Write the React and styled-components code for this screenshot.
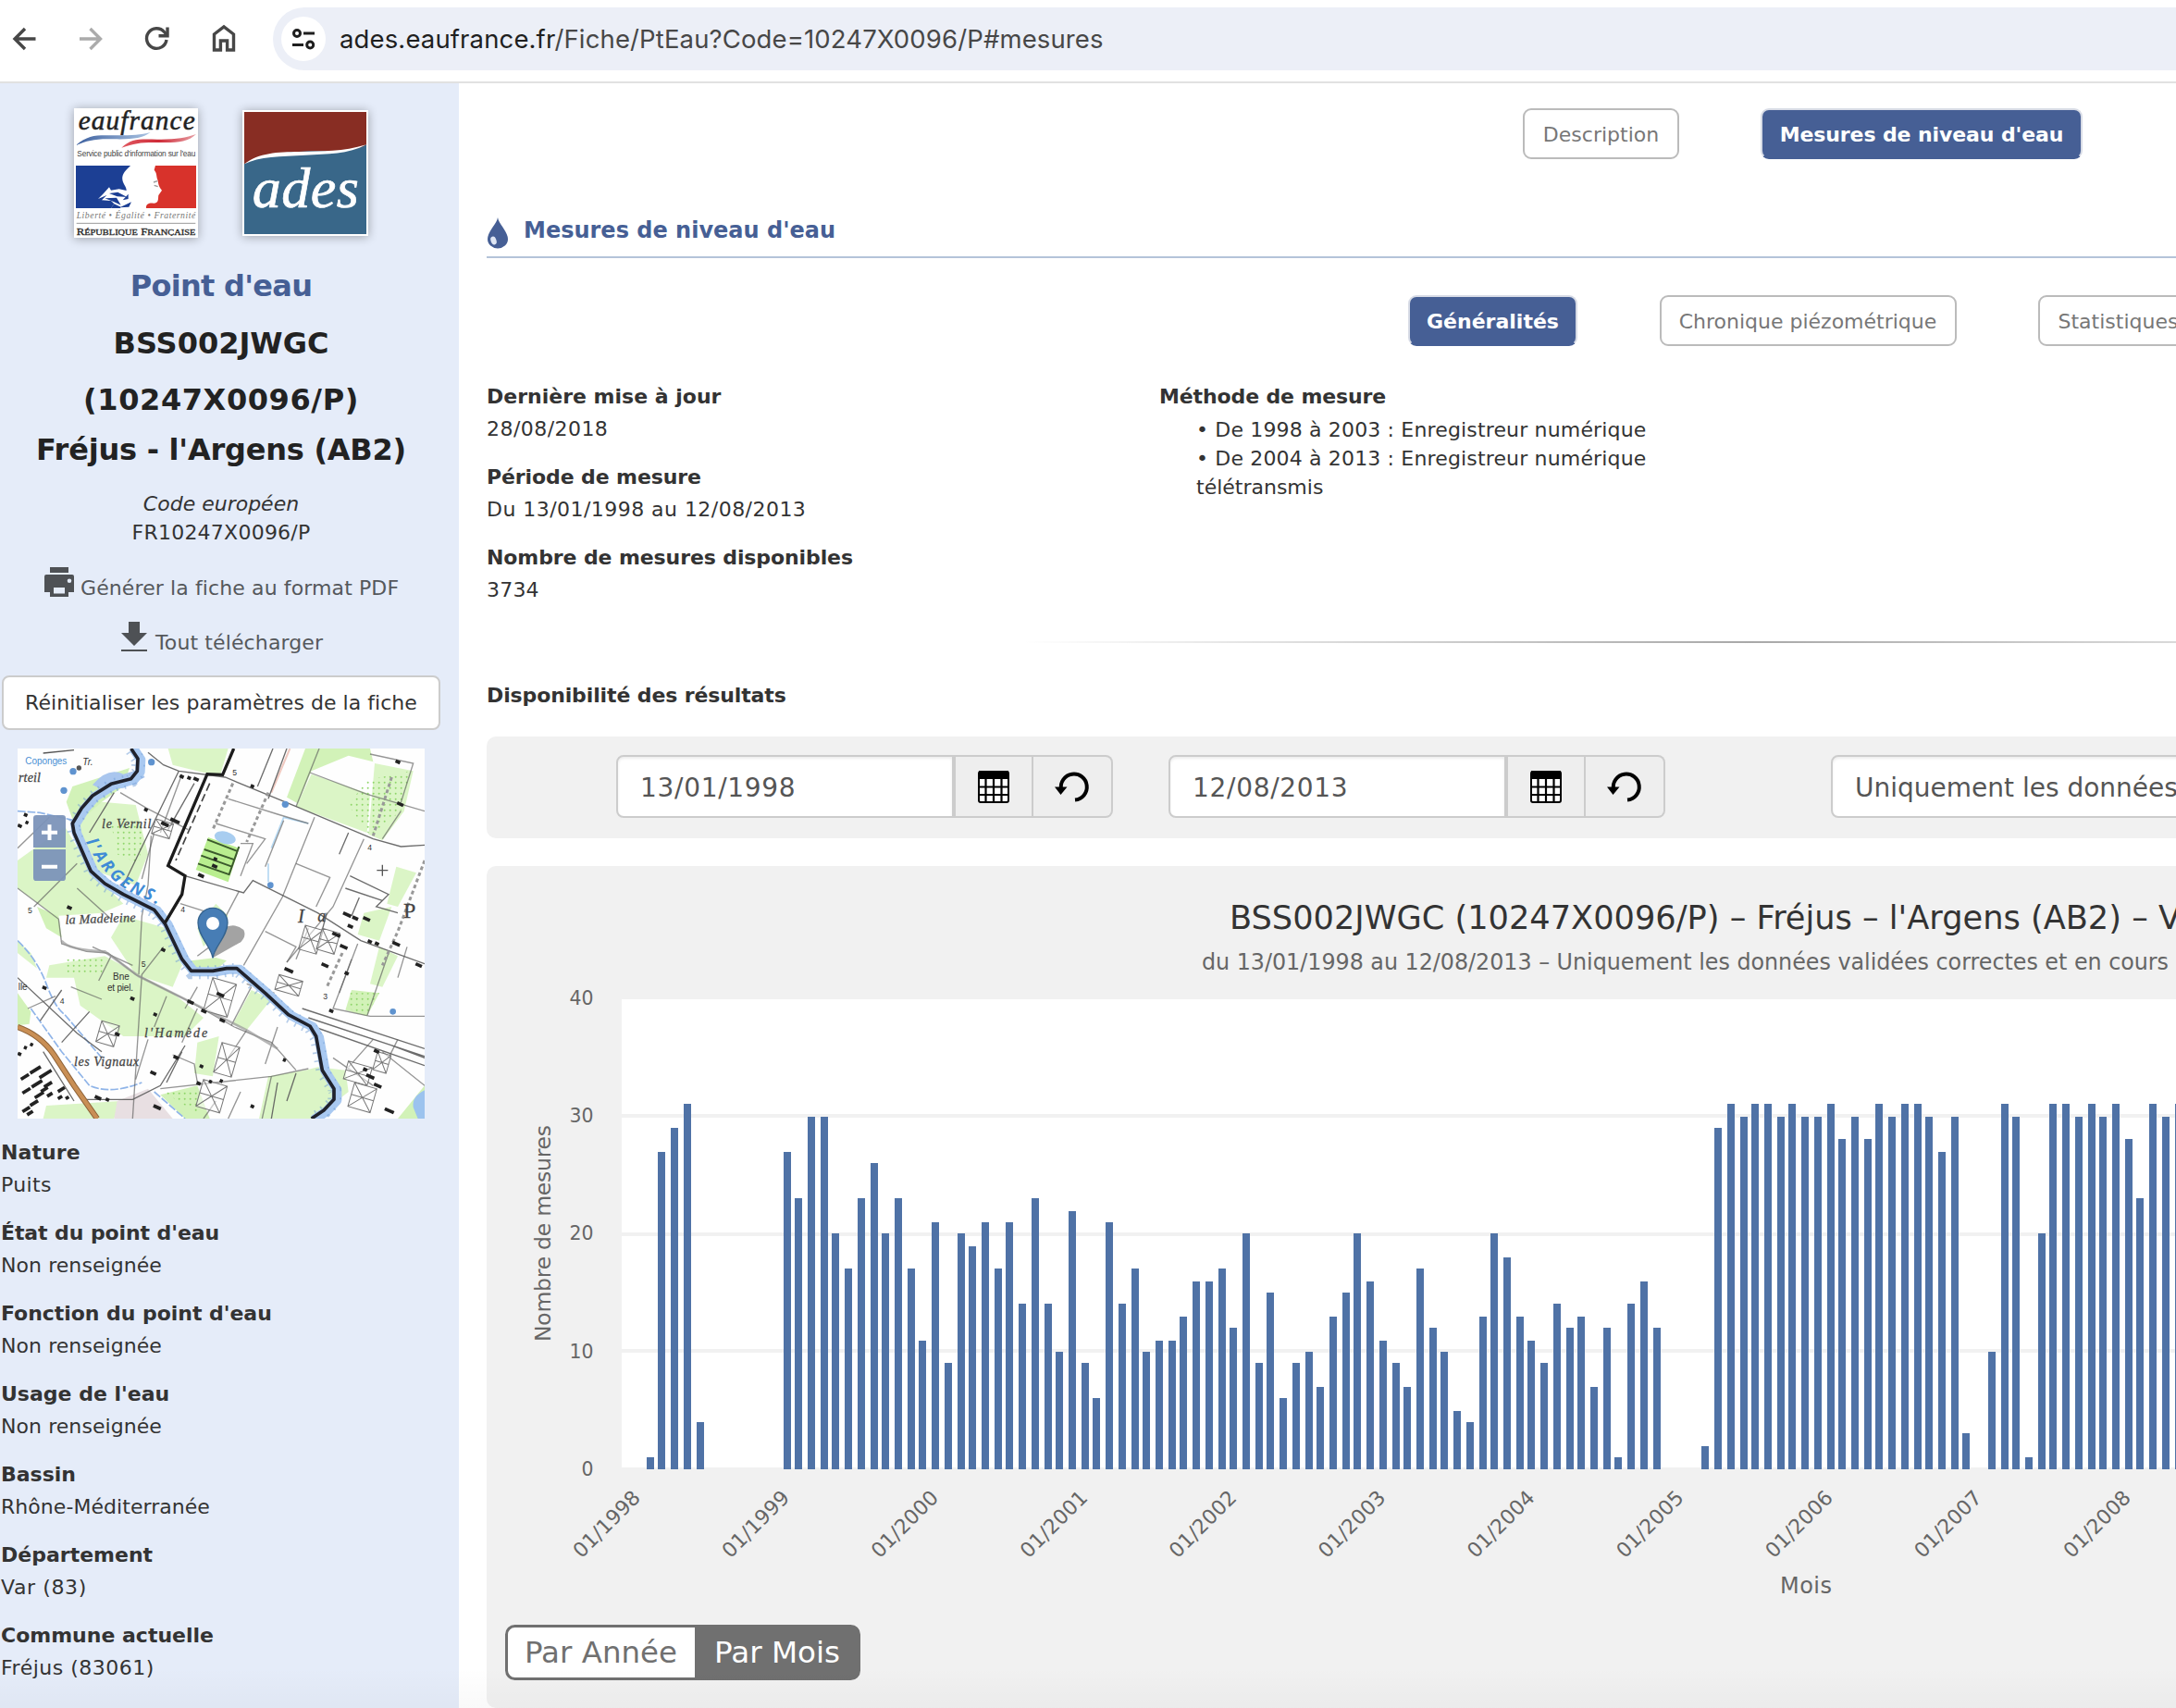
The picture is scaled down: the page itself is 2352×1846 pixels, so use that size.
import React from 'react';
import styled, { createGlobalStyle } from 'styled-components';

const Global = createGlobalStyle`
  * { box-sizing: border-box; }
  body { margin: 0; background: #fff; overflow: hidden; }
  #root { font-family: 'DejaVu Sans', Verdana, sans-serif; color: #333; }
  svg { display: block; flex: none; }
`;

const blue = '#465f95';

const Window = styled.div`
  position: relative;
  width: 2352px;
  height: 1846px;
  overflow: hidden;
  display: flex;
  flex-direction: column;
`;

const Toolbar = styled.header`
  height: 90px;
  flex: none;
  display: flex;
  align-items: flex-start;
  border-bottom: 2px solid #e1e1e1;
  background: #fff;
`;

const NavIcons = styled.div`
  width: 295px;
  height: 84px;
`;

const UrlBar = styled.div`
  flex: 1;
  height: 68px;
  margin-top: 8px;
  padding-left: 9px;
  display: flex;
  align-items: center;
  background: #eceff7;
  border-radius: 34px 0 0 34px;
`;

const SiteInfo = styled.div`
  width: 48px;
  height: 48px;
  border-radius: 50%;
  background: #fff;
  display: flex;
  align-items: center;
  justify-content: center;
`;

const Url = styled.div`
  margin-left: 15px;
  font: 27.5px/40px Inter, Roboto, sans-serif;
  letter-spacing: 0.13px;
  color: #474747;
  white-space: nowrap;
  b { font-weight: 400; color: #1f1f1f; }
`;

const Body = styled.div`
  flex: 1;
  display: flex;
  min-height: 0;
`;

const Sidebar = styled.aside`
  width: 496px;
  flex: none;
  background: #e5ecf9;
  padding: 27px 18px 0 0;
  overflow: hidden;
`;

const Logos = styled.div`
  display: flex;
  align-items: center;
  gap: 48px;
  padding-left: 80px;
  margin-bottom: 25px;
`;

const LogoCard = styled.div`
  padding: 2px;
  background: #fff;
  box-shadow: 0 1px 10px rgba(0, 0, 0, 0.32);
`;

const Line = styled.div`
  font-size: ${p => p.$size || 22}px;
  line-height: ${p => p.$lh || 31}px;
  font-weight: ${p => (p.$bold ? 700 : 400)};
  font-style: ${p => (p.$italic ? 'italic' : 'normal')};
  letter-spacing: ${p => p.$ls || 0}px;
  margin-top: ${p => p.$mt || 0}px;
  color: ${p => p.$color || '#333'};
  text-align: ${p => (p.$center ? 'center' : 'left')};
  white-space: nowrap;
`;

const Action = styled.a`
  display: flex;
  height: 38px;
  margin-top: ${p => p.$mt}px;
  padding-left: ${p => p.$left}px;
  gap: ${p => p.$gap}px;
`;

const ResetButton = styled.button`
  display: block;
  width: 474px;
  height: 59px;
  margin: 20px 0 20px 2px;
  padding: 0;
  border: 2px solid #ccc;
  border-radius: 8px;
  background: #fff;
  color: #333;
  font: 22px/54px 'DejaVu Sans', sans-serif;
  letter-spacing: 0.04px;
  white-space: nowrap;
`;

const MapBox = styled.div`
  margin: 0 0 18px 19px;
  width: 440px;
  height: 400px;
`;

const Pair = styled.div`
  padding-left: ${p => p.$inset || 0}px;
  margin-bottom: 17px;
`;

const Main = styled.main`
  flex: 1;
  min-width: 0;
  padding: 27px 0 0 30px;
  overflow: hidden;
`;

const Tabs = styled.nav`
  display: flex;
  gap: ${p => p.$gap}px;
  padding-left: ${p => p.$left}px;
`;

const Tab = styled.div`
  flex: none;
  width: ${p => p.$w}px;
  height: 55px;
  border: 2px solid ${p => (p.$active ? '#d8dce6' : '#bbb')};
  border-bottom-color: ${p => (p.$active ? blue : '#bbb')};
  border-radius: 9px;
  background: ${p => (p.$active ? blue : '#fff')};
  color: ${p => (p.$active ? '#fff' : '#777')};
  font-size: 22px;
  line-height: 53px;
  font-weight: ${p => (p.$active ? 700 : 400)};
  letter-spacing: ${p => p.$ls || 0}px;
  text-align: center;
  white-space: nowrap;
`;

const Heading = styled.div`
  display: flex;
  gap: 16px;
  height: 50px;
  margin: 57px 0 40px;
  border-bottom: 2px solid #b4c3d9;
`;

const InfoGrid = styled.div`
  display: grid;
  grid-template-columns: 727px 1fr;
  margin-top: 36px;
  height: 246px;
`;

const Methods = styled.div`
  padding-left: 40px;
  padding-top: 1px;
`;

const Divider = styled.div`
  height: 2px;
  margin: 37px 0 39px 546px;
  background: linear-gradient(90deg, rgba(0,0,0,0) 2%, rgba(0,0,0,0.34) 50%, rgba(0,0,0,0)) 0 0 / 1638px 2px no-repeat;
`;

const FilterPanel = styled.div`
  height: 110px;
  margin: 26px 0 30px;
  padding: 20px 0 0 140px;
  display: flex;
  background: #f1f1f1;
  border-radius: 10px 0 0 10px;
`;

const InputGroup = styled.div`
  display: flex;
  flex: none;
  margin-right: ${p => p.$mr}px;
`;

const Field = styled.div`
  width: ${p => p.$w}px;
  height: 68px;
  padding-left: 24px;
  border: 2px solid #ccc;
  border-radius: 8px 0 0 8px;
  background: #fff;
  box-shadow: inset 0 2px 3px rgba(0, 0, 0, 0.075);
  color: #555;
  font-size: 28px;
  line-height: 67px;
  letter-spacing: ${p => p.$ls || 0}px;
  white-space: nowrap;
`;

const Addon = styled.div`
  width: 86px;
  height: 68px;
  display: flex;
  align-items: center;
  justify-content: center;
  background: #eee;
  border: 2px solid #ccc;
  border-left-width: ${p => (p.$last ? 0 : 2)}px;
  border-radius: ${p => (p.$last ? '0 8px 8px 0' : 0)};
`;

const ChartPanel = styled.section`
  height: 910px;
  background: #f1f1f1;
  border-radius: 10px 0 0 10px;
  overflow: hidden;
`;

const BottomShade = styled.div`
  position: absolute;
  left: 0;
  right: 0;
  bottom: 0;
  height: 44px;
  background: linear-gradient(rgba(0, 0, 0, 0), rgba(0, 0, 0, 0.025));
`;

/* ---------- icons ---------- */

const BrowserIcons = () => (
  <svg width="295" height="84" fill="none" stroke="#474747" strokeWidth="3.4">
    <path d="M38.500 42H16.500M27 31L16 42L27 53" />
    <path d="M86 42H108M97.500 31L108.500 42L97.500 53" stroke="#ababab" />
    <path d="M180 43A10.800 10.800 0 1 1 177.500 34.500L181 38.500" />
    <path d="M181 29.500V38.700H171.500" />
    <path d="M231.500 54V37L242 29L252.500 37V54H245.600V44H238.400V54Z" />
  </svg>
);

const TuneIcon = () => (
  <svg width="26" height="24" fill="none" stroke="#1f1f1f" strokeWidth="3">
    <circle cx="6" cy="6" r="3.500" />
    <path d="M13 6H25M1 18.500H13" />
    <circle cx="20.200" cy="18.500" r="3.500" />
  </svg>
);

const PrintIcon = () => (
  <svg width="32" height="32" fill="#4e5155">
    <path d="M6 0H26V6H6Z" />
    <path fillRule="evenodd" d="M2 8H30Q32 8 32 10V27H26V32H6V27H0V10Q0 8 2 8ZM10 22V28.500H22V22ZM27 12.500A2.300 2.300 0 1 0 27 17.100A2.300 2.300 0 1 0 27 12.500Z" />
  </svg>
);

const DownloadIcon = () => (
  <svg width="28" height="32" fill="#4e5155">
    <path d="M8 0H20V12H28L14 26L0 12H8ZM0 30H28V32H0Z" />
  </svg>
);

const DropSvg = styled.svg`
  margin-top: 6px;
`;

const DropIcon = () => (
  <DropSvg width="24" height="34">
    <path d="M12 0C13 7 23 15 23 23.500A11 10 0 0 1 1 23.500C1 15 11 7 12 0Z" fill={blue} />
    <ellipse cx="7.500" cy="25" rx="3" ry="4.500" fill="#dfe6f3" transform="rotate(-20 7.500 25)" />
  </DropSvg>
);

const CalendarIcon = () => (
  <svg width="34" height="35" fill="none" stroke="#000">
    <rect x="1" y="1" width="32" height="33" rx="2" strokeWidth="2" fill="#fff" />
    <path d="M1 0H33V9H1Z" fill="#000" stroke="none" />
    <path d="M8.500 9V34M17 9V34M25.500 9V34M1 17.500H33M1 26H33" strokeWidth="2.200" />
  </svg>
);

const UndoIcon = () => (
  <svg width="38" height="34" fill="none" stroke="#000" strokeWidth="4">
    <path d="M7 20A14 14 0 1 1 22 31.500" />
    <path d="M0 17.500H13.500L6.500 26Z" fill="#000" stroke="none" />
  </svg>
);

const EauFranceLogo = () => (
  <svg width="130" height="136" viewBox="36 42 390 408">
    <defs>
      <linearGradient id="bl"><stop offset="0" stopColor="#3c5f9e" /><stop offset="1" stopColor="#a9c3e2" /></linearGradient>
      <linearGradient id="rd"><stop offset="0" stopColor="#e05a62" /><stop offset=".5" stopColor="#cf2b38" /><stop offset="1" stopColor="#e7a1a6" /></linearGradient>
    </defs>
    <rect x="36" y="42" width="390" height="408" fill="#fff" />
    <text x="44" y="106" fontFamily="'Liberation Serif', serif" fontStyle="italic" fontSize="88" fill="#222" stroke="#222" strokeWidth="1.500" textLength="378">eaufrance</text>
    <path d="M36 156C80 118 110 124 170 124C220 124 245 122 278 114C250 134 220 137 160 136C100 134 75 140 36 156Z" fill="url(#bl)" />
    <path d="M184 164C215 134 240 136 300 137C360 138 390 132 426 120C400 146 360 148 310 147C250 146 230 148 184 164Z" fill="url(#rd)" />
    <text x="40" y="193" fontFamily="'Liberation Sans', sans-serif" fontSize="25" fill="#444" textLength="384">Service public d'information sur l'eau</text>
    <rect x="36" y="222" width="178" height="138" fill="#1c3f94" />
    <rect x="264" y="222" width="162" height="138" fill="#d8322b" />
    <path d="M214 221C200 235 184 248 187 268C190 285 200 290 200 303L176 298L150 302L144 292L126 312L108 330L136 318L120 334L150 336L160 346L150 360H264C262 345 276 342 288 344C306 344 302 330 304 318L315 302C303 288 304 280 301 268C296 255 300 248 290 236L294 221Z" fill="#fff" />
    <path d="M144 312L172 308L202 324L170 322ZM130 328L168 326L182 350L160 340ZM178 358L216 340L208 356ZM188 334L206 314V330Z" fill="#1c3f94" />
    <path d="M150 360L160 346L182 356L180 360Z" fill="#1c3f94" />
    <path d="M288 276L300 272M290 286L302 290" stroke="#999" strokeWidth="4" />
    <text x="38" y="394" fontFamily="'Liberation Serif', serif" fontStyle="italic" fontSize="29" fill="#777" textLength="386">Liberté • Égalité • Fraternité</text>
    <path d="M38 409H424" stroke="#999" strokeWidth="3" />
    <text x="38" y="447" fontFamily="'Liberation Serif', serif" fontSize="32" fill="#222" stroke="#333" textLength="386" lengthAdjust="spacingAndGlyphs">R<tspan fontSize="26">ÉPUBLIQUE</tspan> F<tspan fontSize="26">RANÇAISE</tspan></text>
  </svg>
);

const AdesLogo = () => (
  <svg width="132" height="132" viewBox="582 48 396 396">
    <rect x="582" y="48" width="396" height="396" fill="#396789" />
    <path d="M582 48H978V154C930 184 850 172 770 176C690 180 630 186 582 217Z" fill="#882d23" />
    <path d="M582 217C630 180 690 178 760 177C840 174 900 178 978 154C920 186 850 184 780 188C700 192 630 192 582 217Z" fill="#fff" />
    <text x="608" y="358" fontFamily="'Liberation Serif', serif" fontStyle="italic" fontSize="186" fill="#fff" stroke="#fff" strokeWidth="2" textLength="346">ades</text>
  </svg>
);

/* ---------- map ---------- */

const greens = [
  'M545 57H740L715 140L660 135L560 110Z', 'M1020 57H1200L1210 100L1130 80L1010 130L965 235L930 215L990 57Z',
  'M1010 140L1200 205L1190 330L960 245Z', 'M1215 105L1340 130L1310 260L1240 355L1195 335Z',
  'M235 180L420 120L400 180L330 230L290 330L240 300L215 230Z', 'M250 300L330 230L440 240L480 400L440 500L300 450Z',
  'M57 420L210 310L300 460L400 560L330 590L180 600L57 510Z', 'M120 570L190 600L200 670L150 640Z',
  'M400 600L540 640L590 760L560 830L440 790L360 670Z', 'M160 760L340 730L560 850L660 930L600 990L400 990L260 890L240 800L150 800Z',
  'M620 745L700 735L735 745L700 775L620 770Z', 'M640 640L700 560L740 600L660 700Z', 'M815 840L880 870L800 970L755 950Z',
  'M57 850L100 910L95 950L57 955Z', 'M1285 440L1350 460L1290 570L1255 560Z', 'M1180 590L1270 570L1230 680L1160 660Z',
  'M1140 840L1230 850L1190 925L1120 905Z', 'M1230 700L1290 730L1240 830L1200 820Z',
  'M870 1120L990 1100L1030 1090L1120 1100L1130 1170L1020 1257H840Z', 'M520 1180L640 1150L680 1257H600Z',
  'M150 1215L390 1200L370 1257H140Z', 'M640 1010L710 990L690 1120L630 1110Z', 'M1290 1257L1377 1150V1257Z', 'M57 680L100 720L120 770L57 720Z',
];
const roads = [
  'M480 70L530 110L580 130L730 150L960 245L1210 350L1300 375L1377 370', 'M1020 280L915 540L790 760', 'M1035 57L960 245M1200 75L1340 105L1300 232M1005 135L1190 205L1377 260',
  'M885 57L835 180M930 57L870 220', 'M1180 350L1130 460L1080 570L930 750', 'M390 200L475 250L610 320', 'M370 200L290 330M580 130L400 500M630 170L545 320',
  'M57 380L160 280M57 510L190 610L200 690L280 715L350 720L440 790L620 880L760 960L880 1010L960 1100', 'M110 570L250 430M250 510L360 610',
  'M600 470L790 525L820 485L910 530L1030 590L1170 680L1377 755', 'M775 520L680 700L640 730', 'M960 430L1070 475L1025 570M860 650L960 700L930 750',
  'M1135 470L1260 530L1220 570L1290 590M1120 510L1240 550M1165 540L1140 600', 'M1160 690L1080 900L1200 925L1377 925M1260 720L1190 925',
  'M800 820L890 850M815 830L750 955M640 830L600 900', 'M980 900L1377 1030M1000 930L1377 1055M1020 960L1377 1085M1270 1020L1377 1060',
  'M360 730L320 810M530 700L460 790L430 1257', 'M490 340L480 500L460 600L450 790', 'M57 800L250 980L330 1040M290 910L200 1010M200 840L130 940', 'M560 1050L630 1080L640 1140M520 1160L880 1120L1000 1095',
  'M880 1120L850 1257M900 960L860 1080M800 970L740 1060', 'M280 1195L430 1195L520 1150L600 1020M140 1040L240 1200', 'M1080 1060L1210 1150M1210 1000L1130 1090M1240 1040L1377 1150',
  'M740 220L900 270L1000 300M920 290L860 440M700 300L860 350L800 430M780 365H820L780 470M585 560L680 590M580 550L540 620',
  'M590 1040L540 1140M900 1140L880 1257M960 1110L930 1200M1060 590L1030 700M1130 330L1100 400',
  'M590 140L520 330M500 330L460 480M300 700L430 760M230 830L330 870M90 900L180 860M480 1000L440 1130M1300 260L1240 350M1290 1000L1260 1060',
  'M540 860L500 960M640 900L590 1010M700 1200L660 1257M780 1170L740 1257M1000 640L960 740M1140 740L1100 850M1320 700L1290 800',
];
const blackBits = [
  [585, 140, 14], [610, 145, 12], [630, 148, 18], [815, 172, 12], [1285, 92, 16], [1290, 228, 22], [555, 280, 32], [525, 292, 26], [470, 248, 12], [220, 565, 16], [690, 430, 18], [695, 408, 12],
  [645, 460, 20], [1115, 585, 28], [1145, 598, 20], [1180, 600, 24], [1080, 650, 28], [1105, 690, 26], [1130, 625, 18], [1195, 675, 14], [1218, 682, 14], [1275, 680, 26], [1045, 750, 24], [925, 765, 30],
  [1120, 778, 14], [1070, 900, 14], [525, 702, 14], [705, 845, 26], [610, 870, 22], [655, 900, 18], [715, 930, 18], [425, 860, 14], [500, 912, 12], [375, 975, 16], [565, 1050, 18], [650, 1080, 12], [490, 1100, 20],
  [500, 1210, 26], [310, 1180, 22], [345, 1188, 12], [815, 1210, 12], [920, 1060, 10], [1215, 1030, 18], [1190, 1110, 28], [1215, 1140, 26], [1250, 1220, 32], [1180, 1090, 14], [1350, 750, 22], [140, 825, 14],
  [65, 1125, 30], [95, 1105, 40], [125, 1120, 46], [100, 1150, 40], [140, 1150, 30], [70, 1170, 30], [110, 1185, 34], [95, 1210, 30], [70, 1230, 28], [150, 1180, 20], [185, 1165, 26], [185, 1188, 16], [210, 1188, 12],
  [85, 1240, 22], [130, 1165, 26], [80, 265, 12], [60, 300, 14], [85, 290, 10], [60, 1040, 12], [80, 1020, 10], [100, 1010, 10], [640, 1135, 14], [680, 1130, 10], [715, 1128, 10],
];
const sheds = [[505, 285, 60, 50], [990, 630, 60, 80], [1045, 640, 60, 70], [905, 790, 80, 50], [690, 800, 80, 110], [330, 940, 60, 70], [720, 1010, 60, 100], [660, 1130, 80, 90], [1130, 1070, 80, 60], [1150, 1140, 75, 80], [1225, 1040, 45, 60]];
const river = 'M425 57L447 90L445 130L425 155L360 172L300 210L265 250L235 300L240 330L295 455L340 495L400 530L500 580L535 625L590 740L620 778L690 778L735 770L768 770L860 850L935 920L1005 957L1025 990L1045 1100L1083 1160V1195L1050 1230L1010 1257';

const MapView = () => (
  <svg width="440" height="400" viewBox="57 57 1320 1200">
    <defs>
      <pattern id="dots" width="18" height="18" patternUnits="userSpaceOnUse"><circle cx="5" cy="5" r="3" fill="#8fd56a" /></pattern>
      <clipPath id="mapClip"><rect x="57" y="57" width="1320" height="1200" /></clipPath>
    </defs>
    <g clipPath="url(#mapClip)">
      <rect x="57" y="57" width="1320" height="1200" fill="#fefefe" />
      {greens.map((d, i) => <path key={i} d={d} fill={i % 3 === 1 ? '#d2f2b8' : '#dbf5c6'} />)}
      <path d="M1130 240L1190 160L1330 130L1300 260L1200 340ZM360 300H470L450 430L380 400ZM210 740L340 730L330 790H220ZM1130 850H1230L1190 920L1130 900ZM530 1170L640 1160V1240Z" fill="url(#dots)" />
      <path d="M380 1200L480 1160L560 1257H370Z" fill="#e8dfe2" />
      <path d="M57 260L130 265L240 290M57 680Q120 740 150 820T210 920L330 1060M100 900L200 1040L290 1150Q360 1180 460 1140M500 1170L600 1257" stroke="#8fb4e8" strokeWidth="5" fill="none" strokeDasharray="26 6" />
      <path d="M940 57L880 200" stroke="#f0c9c0" strokeWidth="6" />
      <path d="M1000 300L920 280L880 380M870 430V490" stroke="#b5d8f2" strokeWidth="5" fill="none" />
      <g fill="none" stroke="#5c5c5c" strokeWidth="4">{roads.map((d, i) => <path key={i} d={d} opacity={i % 3 === 0 ? 0.9 : 0.65} />)}</g>
      <path d="M200 680Q220 710 340 715L450 795L640 890L800 970L900 1030" stroke="#999" strokeWidth="8" fill="none" opacity=".7" />
      <path d="M755 170L690 320M870 200L800 360M1270 150L1210 340M1377 420L1290 650L1240 760M1110 720L1060 830" stroke="#999" strokeWidth="9" strokeDasharray="12 9" fill="none" />
      <path d="M680 170L570 420" stroke="#444" strokeWidth="5" strokeDasharray="26 12" />
      <path d="M675 345L775 380L740 490L635 450Z" fill="#b9ee8f" />
      <path d="M672 352L770 390M662 384L762 418M652 404L752 440M642 430L745 466M775 375L742 468" stroke="#3b5a2c" strokeWidth="6" fill="none" />
      <ellipse cx="730" cy="346" rx="35" ry="20" fill="#a8cdf0" transform="rotate(15 730 346)" />
      <g stroke="#777" strokeWidth="3" fill="#fff" fillOpacity=".5">
        {sheds.map(([x, y, w, h], i) => <path key={i} transform={`rotate(16 ${x} ${y})`} d={`M${x} ${y}h${w}v${h}h${-w}ZL${x + w} ${y + h}M${x + w} ${y}L${x} ${y + h}M${x} ${y + h / 2}h${w}`} />)}
      </g>
      {blackBits.map(([x, y, w], i) => <rect key={i} x={x} y={y} width={w} height="11" fill="#222" transform={`rotate(${i > 48 && i < 64 ? -32 : 24} ${x} ${y})`} />)}
      <path d="M57 960Q130 985 175 1050L240 1150L315 1257" stroke="#8d6238" strokeWidth="19" fill="none" />
      <path d="M57 960Q130 985 175 1050L240 1150L315 1257" stroke="#c98f55" strokeWidth="13" fill="none" />
      <path d="M300 175Q350 115 400 140L450 125L470 150L400 185L330 190Z" fill="#a9c6ee" />
      <path d={river} stroke="#a9c9f1" strokeWidth="30" fill="none" strokeLinejoin="round" transform="translate(10 3)" />
      <path d={river} stroke="#6d9bd6" strokeWidth="44" strokeDasharray="5 22" fill="none" opacity=".5" transform="translate(2 5)" />
      <path d={river} stroke="#a9c9f1" strokeWidth="26" fill="none" strokeLinejoin="round" transform="translate(6 2)" />
      <path d={river} stroke="#20222c" strokeWidth="11" fill="none" strokeLinejoin="round" />
      <path d="M758 57L722 142L672 140L545 437L600 470L590 530L535 622" stroke="#1c1c1c" strokeWidth="10" fill="none" />
      <path d="M1377 1165Q1335 1185 1340 1220L1355 1257H1377Z" fill="#9cc3ee" />
      <g fill="#5f93cf"><circle cx="207" cy="193" r="11" /><circle cx="237" cy="131" r="11" /><circle cx="491" cy="101" r="11" /><circle cx="925" cy="238" r="11" /><circle cx="877" cy="500" r="10" /><circle cx="1274" cy="910" r="10" /></g>
      <circle cx="256" cy="120" r="8" fill="#555" />
      <path d="M140 72L240 62M1222 452H1258M1240 434V470" stroke="#555" strokeWidth="4" />
      <g fontFamily="'Liberation Serif', serif" fontStyle="italic" fontSize="42" fill="#444" stroke="#444" strokeWidth=".8">
        <text x="330" y="316" textLength="160">le Vernil</text>
        <text x="212" y="626" textLength="228" transform="rotate(-2 212 626)">la Madeleine</text>
        <text x="468" y="992" textLength="205">l'Hamède</text>
        <text x="240" y="1086" textLength="210">les Vignaux</text>
        <text x="60" y="166" textLength="72">rteil</text>
        <text x="1030" y="618" fontSize="54">a</text>
        <text x="966" y="622" fontSize="62">I</text>
        <text x="1308" y="606" fontSize="72" fontStyle="normal">P</text>
      </g>
      <g fontFamily="'Liberation Sans', sans-serif" fontSize="30" fill="#333">
        <text x="82" y="108" fill="#4a90d4" textLength="135">Coponges</text>
        <text x="268" y="110" fontStyle="italic">Tr.</text>
        <text x="366" y="808">Bne</text>
        <text x="348" y="842" textLength="84">et piel.</text>
        <text x="59" y="840">lle</text>
        <text x="1048" y="870" fontSize="26">3</text>
        <text x="1192" y="388" fontSize="26">4</text>
        <text x="586" y="588" fontSize="26">4</text>
        <text x="194" y="884" fontSize="26">4</text>
        <text x="458" y="766" fontSize="26">5</text>
        <text x="754" y="144" fontSize="26">5</text>
        <text x="90" y="590" fontSize="26">5</text>
      </g>
      <path id="argens" d="M278 360C320 440 370 500 440 530S520 570 570 590" fill="none" />
      <text fontFamily="'Open Sans', sans-serif" fontWeight="700" fontStyle="italic" fontSize="54" fill="#3f8bd6"><textPath href="#argens" textLength="318">l'ARGENS.</textPath></text>
      <path d="M690 736L725 640Q760 620 790 645Q800 665 780 685Z" fill="#666" opacity=".6" />
      <path d="M690 736C685 700 642 665 642 622A48 48 0 0 1 738 622C738 665 695 700 690 736Z" fill="#477db5" stroke="#35648f" strokeWidth="4" />
      <circle cx="690" cy="624" r="21" fill="#fff" />
      <path d="M118 273H203Q213 273 213 283V378H108V283Q108 273 118 273ZM108 384H213V476Q213 486 203 486H118Q108 486 108 476Z" fill="#7b93b9" fillOpacity=".94" />
      <path d="M135 329H186M160.500 304V354M135 440H186" stroke="#fff" strokeWidth="12" />
    </g>
  </svg>
);

/* ---------- chart ---------- */

const series = {
  2: [1, 27, 29, 31, 4],
  13: [27, 23, 30, 30, 20, 17, 23, 26, 20, 23, 17, 11, 21, 9, 20, 19, 21, 17, 21, 14, 23, 14, 10, 22, 9, 6, 21, 14, 17, 10, 11, 11, 13, 16, 16, 17, 12, 20, 9, 15, 6, 9, 10, 7, 13, 15, 20, 16, 11, 9, 7, 17, 12, 10, 5, 4, 13, 20, 18, 13, 11, 9, 14, 12, 13, 7, 12, 1, 14, 16, 12],
  87: [2, 29, 31, 30, 31, 31, 30, 31, 30, 30, 31, 28, 30, 28, 31, 30, 31, 31, 30, 27, 30, 3],
  110: [10, 31, 30, 1, 20, 31, 31, 30, 31, 30, 31, 28, 23, 31, 30, 31],
};
const bars = Object.entries(series).flatMap(([start, values]) => values.map((v, k) => [Number(start) + k, v]));
const odd = n => 2 * Math.round((n - 1) / 2) + 1;
const lucida = "'DejaVu Sans', 'Lucida Grande', sans-serif";

const Chart = () => (
  <svg width="1826" height="910" viewBox="526 936 1826 910" fontFamily={lucida} fill="#666">
    <text x="1329" y="1003.500" fontSize="36" fill="#333" textLength="1028" lengthAdjust="spacingAndGlyphs">BSS002JWGC (10247X0096/P) – Fréjus – l'Argens (AB2) – V</text>
    <text x="1299" y="1048" fontSize="24" textLength="1045" lengthAdjust="spacingAndGlyphs">du 13/01/1998 au 12/08/2013 – Uniquement les données validées correctes et en cours</text>
    <rect x="672" y="1080" width="1680" height="506" fill="#fff" />
    <path d="M672 1206H2352M672 1334H2352M672 1460H2352" stroke="#f1f1f1" strokeWidth="4" />
    {bars.map(([i, v]) => {
      const top = odd(1588 - v * 12.72);
      return <rect key={i} x={odd(671.5 + i * 13.429)} y={top} width="8" height={1588 - top} fill="#4f72a6" />;
    })}
    <g fontSize="22" textAnchor="end">
      {[40, 30, 20, 10, 0].map((n, k) => <text key={n} x="641.500" y={1086 + k * 127.2} textLength={n ? 26 : 13} lengthAdjust="spacingAndGlyphs">{n}</text>)}
    </g>
    <g fontSize="22">
      {Array.from({ length: 11 }, (_, k) => (
        <text key={k} textAnchor="end" textLength="92" transform={`translate(${693.5 + k * 161.1} 1620) rotate(-45)`}>{`01/${1998 + k}`}</text>
      ))}
    </g>
    <text transform="translate(595 1450) rotate(-90)" fontSize="23.500" textLength="234">Nombre de mesures</text>
    <text x="1924" y="1722" fontSize="24" textLength="56">Mois</text>
    <rect x="547.500" y="1757.500" width="381" height="57" rx="9" fill="#fff" stroke="#707070" strokeWidth="3" />
    <path d="M751 1757H920Q929 1757 929 1766V1806Q929 1815 920 1815H751Z" fill="#707070" />
    <text x="567" y="1796.500" fontSize="32" fill="#707070" textLength="165" lengthAdjust="spacingAndGlyphs">Par Année</text>
    <text x="772" y="1796.500" fontSize="32" fill="#fff" textLength="136" lengthAdjust="spacingAndGlyphs">Par Mois</text>
  </svg>
);

const details = [
  ['Nature', 'Puits', 0.1, 0.35],
  ["État du point d'eau", 'Non renseignée', -0.09, 0.07],
  ["Fonction du point d'eau", 'Non renseignée', -0.04, 0.07],
  ["Usage de l'eau", 'Non renseignée', 0, 0.07],
  ['Bassin', 'Rhône-Méditerranée', 0, 0.05],
  ['Département', 'Var (83)', 0, 0.6],
  ['Commune actuelle', 'Fréjus (83061)', 0, 0.51],
  ['Lieu-dit', '', 0, 0],
];
const measures = [
  ['Dernière mise à jour', '28/08/2018', 0, 0.45],
  ['Période de mesure', 'Du 13/01/1998 au 12/08/2013', -0.1, 0.46],
  ['Nombre de mesures disponibles', '3734', -0.1, 0.2],
];

const InfoPair = ({ label, value, labelSpacing, valueSpacing, inset }) => (
  <Pair $inset={inset}>
    <Line $bold $lh={38} $ls={labelSpacing}>{label}</Line>
    <Line $lh={32} $ls={valueSpacing}>{value}</Line>
  </Pair>
);

const PairList = ({ items, inset }) => items.map(([label, value, a, b]) => (
  <InfoPair key={label} label={label} value={value} labelSpacing={a} valueSpacing={b} inset={inset} />
));

export default function App() {
  return (
    <Window>
      <Global />
      <Toolbar>
        <NavIcons><BrowserIcons /></NavIcons>
        <UrlBar>
          <SiteInfo><TuneIcon /></SiteInfo>
          <Url><b>ades.eaufrance.fr</b>/Fiche/PtEau?Code=10247X0096/P#mesures</Url>
        </UrlBar>
      </Toolbar>
      <Body>
        <Sidebar>
          <Logos>
            <LogoCard><EauFranceLogo /></LogoCard>
            <LogoCard><AdesLogo /></LogoCard>
          </Logos>
          <Line $center $bold $size={32} $lh={54} $ls={-0.7} $color={blue}>Point d'eau</Line>
          <Line $center $bold $size={32} $lh={54} $mt={8} $color="#222">BSS002JWGC</Line>
          <Line $center $bold $size={32} $lh={54} $ls={0.6} $mt={7} $color="#222">(10247X0096/P)</Line>
          <Line $center $bold $size={32} $lh={54} $ls={-0.23} $color="#222">Fréjus - l'Argens (AB2)</Line>
          <Line $center $italic $mt={16}>Code européen</Line>
          <Line $center $ls={0.24}>FR10247X0096/P</Line>
          <Action $mt={22} $left={48} $gap={7}>
            <PrintIcon />
            <Line $mt={7} $ls={0.11} $color="#55585c">Générer la fiche au format PDF</Line>
          </Action>
          <Action $mt={21} $left={131} $gap={9}>
            <DownloadIcon />
            <Line $mt={7} $ls={0.12} $color="#55585c">Tout télécharger</Line>
          </Action>
          <ResetButton>Réinitialiser les paramètres de la fiche</ResetButton>
          <MapBox><MapView /></MapBox>
          <PairList items={details} inset={1} />
        </Sidebar>
        <Main>
          <Tabs $left={1120} $gap={88}>
            <Tab $w={169}>Description</Tab>
            <Tab $w={348} $active $ls={-0.1}>Mesures de niveau d'eau</Tab>
          </Tabs>
          <Heading>
            <DropIcon />
            <Line $bold $size={24} $lh={41} $color={blue}>Mesures de niveau d'eau</Line>
          </Heading>
          <Tabs $left={996} $gap={88.5}>
            <Tab $w={183} $active>Généralités</Tab>
            <Tab $w={321}>Chronique piézométrique</Tab>
            <Tab $w={173}>Statistiques</Tab>
          </Tabs>
          <InfoGrid>
            <div><PairList items={measures} /></div>
            <div>
              <Line $bold $lh={38} $ls={-0.12}>Méthode de mesure</Line>
              <Methods>
                <Line $ls={0.16}>• De 1998 à 2003 : Enregistreur numérique</Line>
                <Line $ls={0.16}>• De 2004 à 2013 : Enregistreur numérique</Line>
                <Line>télétransmis</Line>
              </Methods>
            </div>
          </InfoGrid>
          <Divider />
          <Line $bold $lh={36} $ls={-0.12}>Disponibilité des résultats</Line>
          <FilterPanel>
            <InputGroup $mr={60}>
              <Field $w={365} $ls={0.7}>13/01/1998</Field>
              <Addon><CalendarIcon /></Addon>
              <Addon $last><UndoIcon /></Addon>
            </InputGroup>
            <InputGroup $mr={179}>
              <Field $w={365} $ls={0.7}>12/08/2013</Field>
              <Addon><CalendarIcon /></Addon>
              <Addon $last><UndoIcon /></Addon>
            </InputGroup>
            <InputGroup $mr={0}>
              <Field $w={500}>Uniquement les données</Field>
            </InputGroup>
          </FilterPanel>
          <ChartPanel><Chart /></ChartPanel>
        </Main>
      </Body>
      <BottomShade />
    </Window>
  );
}
